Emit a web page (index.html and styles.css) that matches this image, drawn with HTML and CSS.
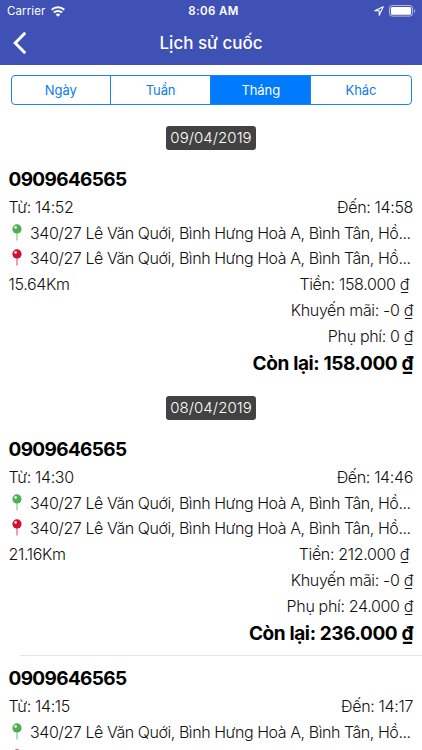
FILE: index.html
```
<!DOCTYPE html>
<html lang="vi">

<head>
  <meta charset="UTF-8">
  <meta name="viewport" content="width=device-width, initial-scale=1.0">
  <title>Lịch sử cuốc</title>
  <link rel="stylesheet" href="styles.css">
</head>

<body>
  <svg width="0" height="0" class="defs">
    <symbol id="pin" viewBox="0 0 10 18">
      <path d="M5 8v8.5" stroke="currentColor" stroke-width="1" stroke-opacity=".8" />
      <circle cx="5" cy="4.9" r="4.6" fill="currentColor" />
      <circle cx="3.6" cy="3.5" r="1.4" fill="#fff" fill-opacity=".8" />
    </symbol>
  </svg>

  <header>
    <div class="status-bar">
      <div class="carrier">
        <span>Carrier</span>
        <svg width="14" height="11" viewBox="0 0 14 11" fill="none" stroke="#fff" stroke-width="2.1">
          <path d="M.7 3.8a9 9 0 0 1 12.6 0" />
          <path d="M2.9 6.6a5.9 5.9 0 0 1 8.2 0" />
          <path d="M7 10.8 4.7 8.5a3.3 3.3 0 0 1 4.6 0z" fill="#fff" stroke="none" />
        </svg>
      </div>
      <div class="clock">8:06 AM</div>
      <div class="indicators">
        <svg width="10" height="10" viewBox="0 0 10 10" fill="none" stroke="#fff" stroke-width="1.1" stroke-linejoin="round">
          <path d="M9.2.8.8 4.7h4.4v4.5z" />
        </svg>
        <svg width="27" height="12" viewBox="0 0 27 12">
          <rect x=".5" y=".5" width="23" height="10.6" rx="2.6" fill="none" stroke="#fff" stroke-opacity=".6" />
          <rect x="1.9" y="1.9" width="20.2" height="7.8" rx="1.3" fill="#fff" />
          <path d="M25 4v3.8q1.3-.6 1.3-1.9T25 4z" fill="#fff" fill-opacity=".5" />
        </svg>
      </div>
    </div>
    <div class="nav-bar">
      <svg class="back" width="14" height="22" viewBox="0 0 14 22" fill="none" stroke="#fff" stroke-width="3" stroke-linecap="round">
        <path d="M11.3 1.7 2.2 11l9.1 9.3" />
      </svg>
      <h1>Lịch sử cuốc</h1>
    </div>
  </header>

  <div class="segment">
    <div class="tab">Ngày</div>
    <div class="tab">Tuần</div>
    <div class="tab active">Tháng</div>
    <div class="tab">Khác</div>
  </div>

  <main>
    <div class="date"><span>09/04/2019</span></div>
    <div class="trip">
      <div class="phone">0909646565</div>
      <div class="row"><span>Từ: 14:52</span><span>Đến: 14:58</span></div>
      <div class="row address"><svg class="pin from"><use href="#pin" /></svg><span>340/27 Lê Văn Quới, Bình Hưng Hoà A, Bình Tân, Hồ...</span></div>
      <div class="row address"><svg class="pin to"><use href="#pin" /></svg><span>340/27 Lê Văn Quới, Bình Hưng Hoà A, Bình Tân, Hồ...</span></div>
      <div class="row"><span>15.64Km</span><span class="fare">Tiền: 158.000 ₫</span></div>
      <div class="row right"><span>Khuyến mãi: -0 ₫</span></div>
      <div class="row right"><span>Phụ phí: 0 ₫</span></div>
      <div class="total">Còn lại: 158.000 ₫</div>
    </div>

    <div class="date"><span>08/04/2019</span></div>
    <div class="trip">
      <div class="phone">0909646565</div>
      <div class="row"><span>Từ: 14:30</span><span>Đến: 14:46</span></div>
      <div class="row address"><svg class="pin from"><use href="#pin" /></svg><span>340/27 Lê Văn Quới, Bình Hưng Hoà A, Bình Tân, Hồ...</span></div>
      <div class="row address"><svg class="pin to"><use href="#pin" /></svg><span>340/27 Lê Văn Quới, Bình Hưng Hoà A, Bình Tân, Hồ...</span></div>
      <div class="row"><span>21.16Km</span><span class="fare">Tiền: 212.000 ₫</span></div>
      <div class="row right"><span>Khuyến mãi: -0 ₫</span></div>
      <div class="row right"><span>Phụ phí: 24.000 ₫</span></div>
      <div class="total">Còn lại: 236.000 ₫</div>
    </div>

    <div class="trip divided">
      <div class="phone">0909646565</div>
      <div class="row"><span>Từ: 14:15</span><span>Đến: 14:17</span></div>
      <div class="row address"><svg class="pin from"><use href="#pin" /></svg><span>340/27 Lê Văn Quới, Bình Hưng Hoà A, Bình Tân, Hồ...</span></div>
      <div class="row address cut"><svg class="pin to"><use href="#pin" /></svg></div>
    </div>
  </main>
</body>

</html>
```
FILE: styles.css
```
* {
  box-sizing: border-box;
}

body {
  margin: 0;
  height: 750px;
  overflow: hidden;
  background: #fff;
  color: #111;
  font-family: Inter, "Liberation Sans", sans-serif;
  display: flex;
  flex-direction: column;
}

.defs {
  position: absolute;
}

header {
  flex: none;
  height: 65px;
  background: #3f51b5;
  color: #fff;
}

.status-bar {
  display: grid;
  grid-template-columns: 1fr auto 1fr;
  align-items: center;
  height: 22px;
  padding: 0 6px 0 7px;
  font-size: 11.5px;
}

.carrier {
  display: flex;
  align-items: center;
  gap: 6px;
  letter-spacing: 0.1px;
}

.clock {
  padding-left: 4px;
  font-weight: 600;
  letter-spacing: 0.4px;
}

.indicators {
  display: flex;
  align-items: center;
  justify-content: flex-end;
  gap: 5px;
}

.nav-bar {
  display: grid;
  grid-template-columns: 40px 1fr 40px;
  align-items: center;
  height: 42px;
}

.back {
  margin-left: 13px;
}

h1 {
  margin: 0;
  font-size: 17px;
  font-weight: 500;
  text-align: center;
}

.segment {
  flex: none;
  display: flex;
  height: 30px;
  margin: 10px 10.5px 0;
  border: 1px solid #1a83ef;
  border-radius: 4px;
  overflow: hidden;
}

.tab {
  flex: 1;
  display: flex;
  align-items: center;
  justify-content: center;
  color: #0a7cea;
  font-size: 13px;
  letter-spacing: -0.1px;
}

.tab:first-child {
  flex: none;
  width: 98.5px;
}

.tab + .tab {
  border-left: 1px solid #1a83ef;
}

.tab.active {
  background: #007aff;
  color: #fff;
}

main {
  flex: 1;
  min-height: 0;
  margin-top: 10px;
  overflow: hidden;
}

.date {
  display: flex;
  justify-content: center;
  height: 41px;
  padding-top: 11px;
}

.date span {
  height: 24px;
  padding: 0 4.5px;
  border-radius: 3px;
  background: #424242;
  color: #fff;
  font-size: 15px;
  font-weight: 300;
  line-height: 24px;
  letter-spacing: 0.05px;
}

.trip {
  height: 229px;
  padding: 9px 9px 0 8.5px;
}

.trip.divided {
  height: 106px;
  background: linear-gradient(#e4e4e4, #e4e4e4) 20px 0 / 100% 1px no-repeat;
}

.phone {
  height: 29px;
  color: #000;
  font-size: 19px;
  font-weight: 700;
  line-height: 29px;
  letter-spacing: -0.65px;
}

.row {
  display: flex;
  align-items: center;
  justify-content: space-between;
  height: 25.75px;
  font-size: 16px;
  font-weight: 300;
  letter-spacing: -0.34px;
  white-space: nowrap;
}

.row.right {
  justify-content: flex-end;
}

.row.address {
  justify-content: flex-start;
  gap: 8.5px;
  letter-spacing: -0.44px;
}

/* last visible row, only the tip of its pin is on screen */
.row.cut {
  height: 16.5px;
  align-items: flex-start;
  padding-top: 4px;
}

.pin {
  flex: none;
  width: 10px;
  height: 18px;
  margin-left: 3px;
}

.from {
  color: #4caf50;
}

.to {
  color: #d50f2f;
}

.fare {
  margin-right: 4px;
}

.total {
  height: 29px;
  color: #000;
  font-size: 19px;
  font-weight: 700;
  line-height: 29px;
  letter-spacing: -0.38px;
  text-align: right;
}
```
